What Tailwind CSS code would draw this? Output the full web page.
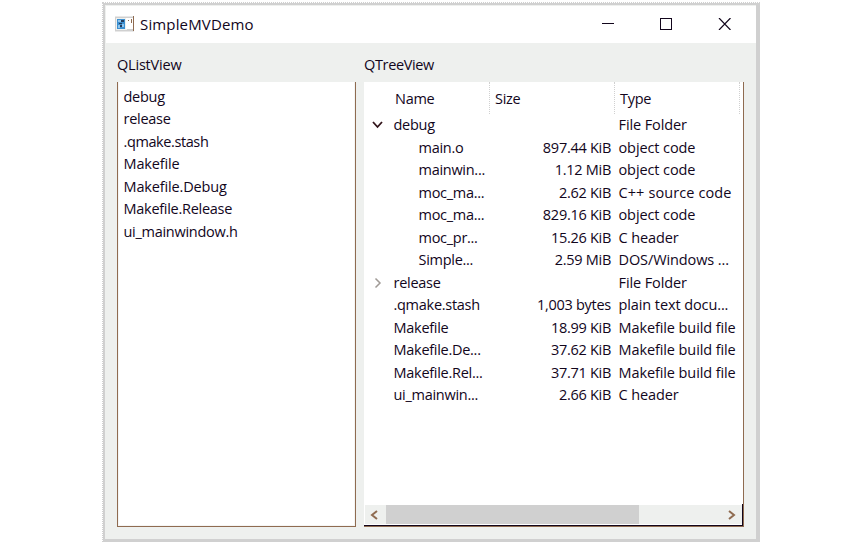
<!DOCTYPE html>
<html lang="en">
<head>
<meta charset="utf-8">
<title>SimpleMVDemo</title>
<script src="https://cdn.jsdelivr.net/npm/@tailwindcss/browser@4"></script>
</head>
<body class="bg-white w-[861px] h-[543px] overflow-hidden pl-[102px] pt-[2px] text-[#12061c] font-['Open_Sans','Noto_Sans',sans-serif] text-[14.5px] tracking-[-0.28px] whitespace-nowrap">
<div class="w-[658px] h-[540px] border-l border-t border-dotted border-[#d0d0d0] bg-clip-padding bg-[#d0d0d0] pl-[2px] pt-[2px] pr-[4px] pb-[3px]">
  <div class="w-full h-full bg-[#eef0ee] flex flex-col border-t border-l border-[#eef0ee]">
    <header class="h-[37px] shrink-0 bg-white flex items-center">
      <svg class="ml-[9px] mb-[1px]" width="19" height="16" viewBox="0 0 19 16">
        <path d="M0 .5h19v15H0z" fill="#d0d0d0"/><path d="M1 2h11v12H1z" fill="#eef0ee"/><path d="M11 2h7v11h-7z" fill="#fff"/>
        <path d="M2 3h8v10H2z" fill="#3b8fd0"/><path d="M3 4h3v2H3zM7 8h2v3H7zM3 9h2v3H3z" fill="#8fc4ec"/><path d="M5 9h2v2H5zM6 4h3v2H6zM4 7h3v1H4z" fill="#243c5c"/>
        <path d="M13 4h1v1h-1zM16 3h1v4h-1z" fill="#8f6b50"/><path d="M18.500 0v15" stroke="#8f6b50"/>
      </svg>
      <span class="ml-[6px] text-[15px] tracking-[0.15px]">SimpleMVDemo</span>
      <div class="ml-auto flex gap-[46px] pr-[25px] mb-px">
        <svg width="12" height="12" shape-rendering="crispEdges"><path d="M0 5.5h12" stroke="#12061c"/></svg>
        <svg width="12" height="12" shape-rendering="crispEdges"><path d="M.5.5h11v11H.5z" fill="none" stroke="#12061c"/></svg>
        <svg width="13" height="12"><path d="M1 0l11.500 12M12.500 0L1 12" stroke="#12061c" stroke-width="1.200"/></svg>
      </div>
    </header>
    <main class="flex pl-[11px] pt-[10px]">
      <section class="w-[239px]">
        <h2 class="h-[29px] leading-[24px] tracking-[-0.2px]">QListView</h2>
        <div class="h-[445px] bg-white border-l border-r border-b border-[#8f6b50]">
          <ul class="h-full border-x border-[#f4f5f4] border-b pt-[3.5px] pl-[4.5px] leading-[22.5px]">
            <li>debug</li><li>release</li><li class="tracking-[-0.4px]">.qmake.stash</li><li class="tracking-[-0.15px]">Makefile</li><li class="tracking-[-0.15px]">Makefile.Debug</li><li>Makefile.Release</li><li>ui_mainwindow.h</li>
          </ul>
        </div>
      </section>
      <section class="ml-[8px] w-[380px]">
        <h2 class="h-[29px] leading-[24px] tracking-[-0.35px]">QTreeView</h2>
        <div class="h-[445px] bg-white border-r border-b border-[#8f6b50] flex flex-col">
          <div class="flex h-[32px] leading-[34px]">
            <div class="w-[126px] pl-[31px] border-r border-dotted border-[#d0d0d0]">Name</div>
            <div class="w-[125px] pl-[5px] border-r border-dotted border-[#d0d0d0]">Size</div>
            <div class="w-[125px] pl-[5px] border-r border-dotted border-[#d0d0d0]">Type</div>
          </div>
          <div id="rows" class="leading-[22.5px] h-[390px]"></div>
          <div class="h-[22px] border-r border-b border-[#12061c] pt-px pl-px pb-px">
            <div class="h-[19px] bg-[#eef0ee] flex items-center">
              <svg class="ml-[5px] mr-[7px]" width="9" height="10"><path d="M7 1L2 5l5 4" fill="none" stroke="#8f6b50" stroke-width="2"/></svg>
              <div class="w-[253px] h-full bg-[#d0d0d0]"></div>
              <svg class="ml-auto mr-[6px]" width="9" height="10"><path d="M2 1l5 4-5 4" fill="none" stroke="#8f6b50" stroke-width="2"/></svg>
            </div>
          </div>
        </div>
      </section>
    </main>
  </div>
</div>
<script>
const rows = [
  ['open','debug','','File Folder'],
  ['child','main.o','897.44 KiB','object code'],
  ['child','mainwin...','1.12 MiB','object code'],
  ['child','moc_ma...','2.62 KiB','C++ source code'],
  ['child','moc_ma...','829.16 KiB','object code'],
  ['child','moc_pr...','15.26 KiB','C header'],
  ['child','Simple...','2.59 MiB','DOS/Windows ...'],
  ['closed','release','','File Folder'],
  ['','.qmake.stash','1,003 bytes','plain text docu...'],
  ['','Makefile','18.99 KiB','Makefile build file'],
  ['','Makefile.De...','37.62 KiB','Makefile build file'],
  ['','Makefile.Rel...','37.71 KiB','Makefile build file'],
  ['','ui_mainwin...','2.66 KiB','C header'],
];
const icons = {
  open: '<svg width="12" height="8"><path d="M1 1l4.500 5 4.500-5" fill="none" stroke="#32141a" stroke-width="1.8"/></svg>',
  closed: '<svg width="12" height="12"><path d="M3.500 1.500l4.500 4.500-4.500 4.500" fill="none" stroke="#a09a96" stroke-width="1.5"/></svg>',
};
document.getElementById('rows').innerHTML = rows.map(([k, n, s, t]) =>
  `<div class="flex h-[22.5px]"><div class="w-[29.5px] pl-[8px] flex items-center">${icons[k] || ''}</div>` +
  `<div class="w-[96px] ${k === 'child' ? 'pl-[25px]' : ''}">${n}</div>` +
  `<div class="w-[121.5px] text-right">${s}</div><div class="pl-[7.5px] ${t.startsWith('C++') ? 'tracking-[0.1px]' : 'tracking-[-0.1px]'}">${t}</div></div>`).join('');
</script>
</body>
</html>
